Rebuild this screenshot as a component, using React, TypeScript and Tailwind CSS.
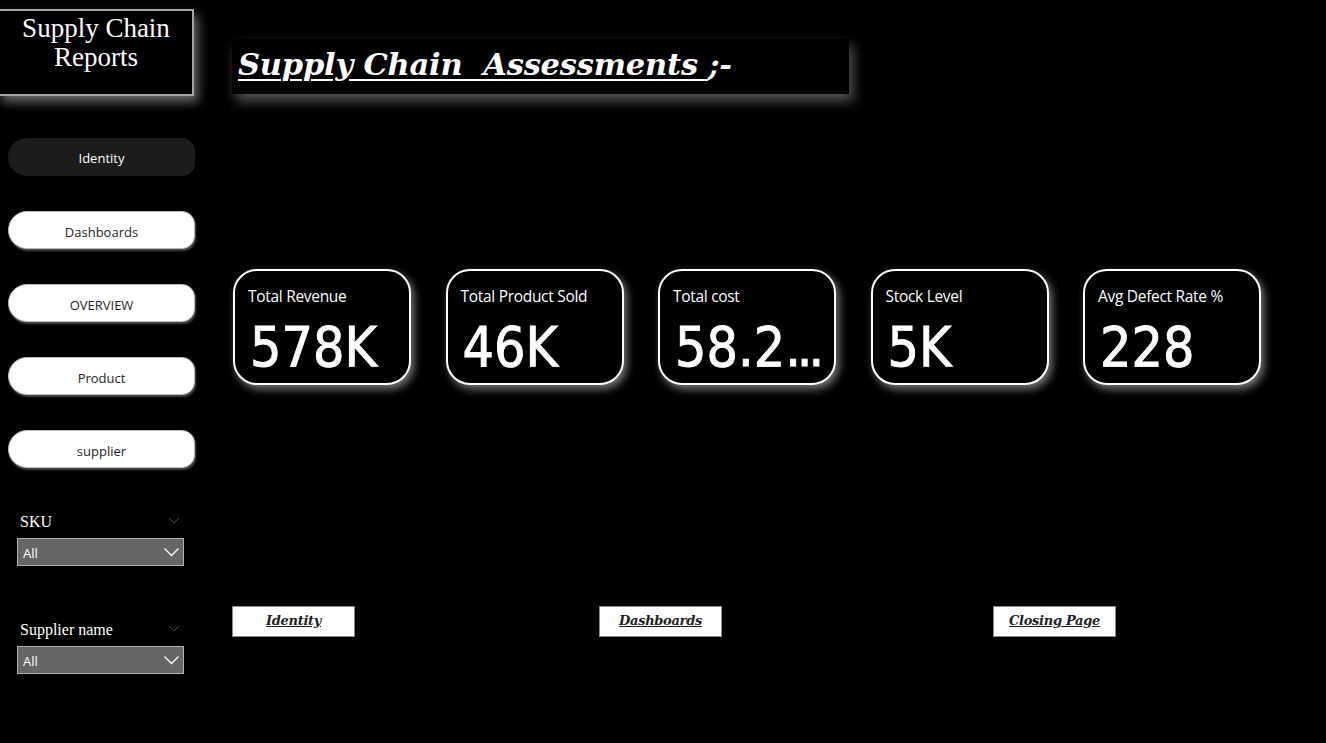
import { ReactNode } from "react";

const navItems = ["Dashboards", "OVERVIEW", "Product", "supplier"];

const kpis = [
  { label: "Total Revenue", value: "578K", dots: false },
  { label: "Total Product Sold", value: "46K", dots: false },
  { label: "Total cost", value: "58.2", dots: true },
  { label: "Stock Level", value: "5K", dots: false },
  { label: "Avg Defect Rate %", value: "228", dots: false },
];

function Chevron({ className }: { className?: string }) {
  return (
    <svg viewBox="0 0 16 10" className={className} fill="none" stroke="currentColor" strokeWidth="1.3">
      <path d="M1 1.5 L8 8.5 L15 1.5" />
    </svg>
  );
}

function Slicer({ label, top }: { label: string; top: string }) {
  return (
    <div className={`${top} pl-[17px] w-[184px]`}>
      <div className="flex items-center justify-between pl-[3px] pr-[4px] h-[18px]">
        <span className="font-['Liberation_Serif',serif] text-[16px] text-white">{label}</span>
        <Chevron className="w-[12px] h-[7px] text-[#555] -mt-[4px]" />
      </div>
      <div className="mt-[7px] h-[28px] bg-[#666666] border border-[#b0b0b0] flex items-center justify-between pl-[5px] pr-[3px]">
        <span className="font-['Open_Sans',sans-serif] text-[13px] text-white pt-[3px]">All</span>
        <Chevron className="w-[17px] h-[10px] text-white" />
      </div>
    </div>
  );
}

function LinkBox({ children, ml }: { children: ReactNode; ml: string }) {
  return (
    <div className={`${ml} w-[123px] h-[31px] bg-white border border-[#8a8a8a] flex items-center justify-center`}>
      <span className="font-['DejaVu_Serif',serif] italic font-bold underline text-[13px] text-[#222] tracking-[-0.3px] -mt-[2px]">
        {children}
      </span>
    </div>
  );
}

export default function App() {
  return (
    <div className="w-full h-[743px] bg-black flex overflow-hidden">
      {/* sidebar */}
      <div className="w-[232px] shrink-0 flex flex-col">
        <div className="mt-[9px] -ml-[2px] w-[196px] h-[87px] border-2 border-[#a5a5a5] bg-black shadow-[4px_6px_10px_rgba(190,190,190,0.55)] flex justify-center pt-[3px]">
          <p className="font-['Liberation_Serif',serif] text-[27px] leading-[29px] text-white text-center">
            Supply Chain
            <br />
            Reports
          </p>
        </div>

        <div className="mt-[42px] ml-[8px] w-[187px] flex flex-col gap-[35px]">
          <div className="h-[38px] rounded-l-[19px] rounded-r-[13px] bg-[#1c1c1c] flex items-center justify-center pt-[4px] font-['Open_Sans',sans-serif] text-[13px] text-white">
            Identity
          </div>
          {navItems.map((n) => (
            <div
              key={n}
              className="h-[38px] rounded-l-[19px] rounded-r-[13px] bg-white border border-[#bbb] shadow-[1px_2px_2px_rgba(120,120,120,0.6)] flex items-center justify-center pt-[5px] font-['Open_Sans',sans-serif] text-[13px] text-[#252525]"
            >
              {n}
            </div>
          ))}
        </div>

        <Slicer label="SKU" top="mt-[45px]" />
        <Slicer label="Supplier name" top="mt-[55px]" />
      </div>

      {/* main */}
      <div className="flex-1 flex flex-col">
        <div className="mt-[39px] w-[617px] h-[55px] bg-black shadow-[4px_7px_12px_rgba(170,170,170,0.5)] flex items-center pl-[6px] pb-[3px]">
          <h1 className="font-['DejaVu_Serif',serif] italic font-bold text-[30.5px] text-white tracking-[-0.2px]">
            <span className="underline decoration-[2px] underline-offset-[4px]">Supply Chain&nbsp; Assessments </span>;-
          </h1>
        </div>

        <div className="mt-[175px] ml-[1px] flex gap-[34.5px]">
          {kpis.map((k) => (
            <div
              key={k.label}
              className="w-[178px] h-[116px] rounded-[24px] border-2 border-white bg-black shadow-[3px_4px_8px_rgba(220,220,220,0.55)] pl-[13px] pt-[14px]"
            >
              <div className="font-['Open_Sans',sans-serif] text-[15.5px] leading-[22px] text-white tracking-[-0.3px]">
                {k.label}
              </div>
              <div className="mt-[8px] ml-[2px] font-['DejaVu_Sans_Condensed','DejaVu_Sans',sans-serif] font-stretch-condensed text-[55px] leading-[64px] text-white [-webkit-text-stroke:0.9px_white]">
                {k.value}
                {k.dots && <span className="tracking-[-4px]">...</span>}
              </div>
            </div>
          ))}
        </div>

        <div className="mt-[221px] flex">
          <LinkBox ml="ml-0">Identity</LinkBox>
          <LinkBox ml="ml-[244px]">Dashboards</LinkBox>
          <LinkBox ml="ml-[271px]">Closing Page </LinkBox>
        </div>
      </div>
    </div>
  );
}
